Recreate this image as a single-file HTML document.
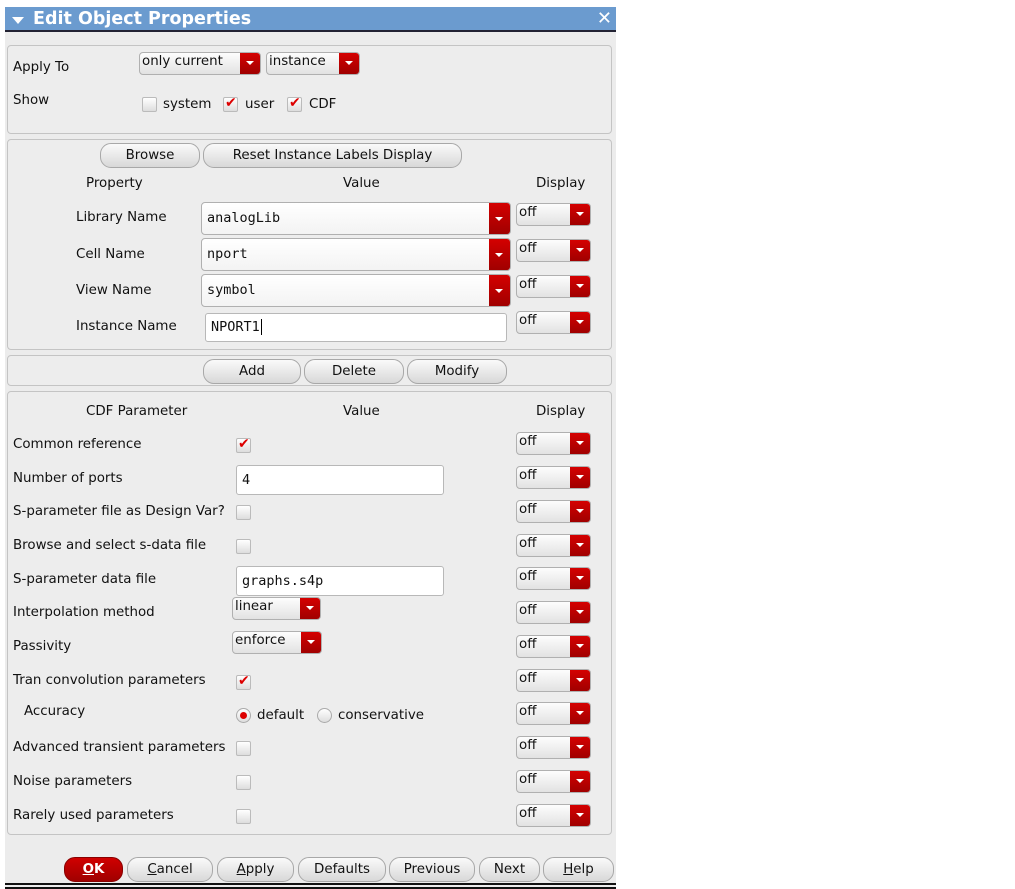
<!DOCTYPE html>
<html><head><meta charset="utf-8"><style>
*{box-sizing:border-box;margin:0;padding:0}
body{width:1015px;height:889px;background:#fff;position:relative;overflow:hidden;font-family:"DejaVu Sans","Liberation Sans",sans-serif;font-size:13.4px;color:#111}
.dlg{position:absolute;left:5px;top:7px;width:611px;height:882px;background:#ececec}
.title{position:absolute;left:5px;top:7px;width:611px;height:25px;background:#6b9bcf;border-bottom:2px solid #223;color:#fff;font-weight:bold;font-size:17.5px;line-height:24px;padding-left:28px}
.title .tri{position:absolute;left:7px;top:10px;border-left:6px solid transparent;border-right:6px solid transparent;border-top:7px solid #fff}
.title .x{position:absolute;right:4px;top:0;font-size:18px}
.p{position:absolute;left:7px;width:605px;border:1px solid #c4c4c4;border-radius:4px;background:#ededed}
.a{position:absolute;white-space:nowrap}
.cb{position:absolute;height:23px;background:linear-gradient(#fdfdfd,#e2e2e2);border:1px solid #b0b0b0;border-radius:4px;padding-left:2px;line-height:18px;overflow:hidden}
.cb .r{position:absolute;right:0;top:0;bottom:0;width:20px;background:linear-gradient(#d40000,#a00000)}
.cb .r:after{content:"";position:absolute;left:6px;top:8px;border-left:4px solid transparent;border-right:4px solid transparent;border-top:4px solid #fff}
.vc{height:33px;line-height:30px;font-family:"DejaVu Sans Mono","Liberation Mono",monospace;padding-left:5px;font-size:13.5px;background:linear-gradient(#fff,#f3f3f3)}
.vc .r{width:21px}
.vc .r:after{top:14px}
.tf{position:absolute;background:#fff;border:1px solid #b8b8b8;border-radius:3px;font-family:"DejaVu Sans Mono","Liberation Mono",monospace;font-size:13.5px;padding-left:5px}
.btn{position:absolute;height:25px;background:linear-gradient(#fafafa,#d8d8d8);border:1px solid #a8a8a8;border-radius:11px;text-align:center;line-height:23px}
.ck{position:absolute;width:15px;height:15px;border:1px solid #bbb;border-radius:2px;background:linear-gradient(#fff,#ddd)}
.ck.on:after{content:"✔";position:absolute;left:1px;top:-3px;color:#d00;font-size:14px}
.rad{position:absolute;width:15px;height:15px;border:1px solid #aaa;border-radius:50%;background:linear-gradient(#fff,#ddd)}
.rad.on:after{content:"";position:absolute;left:3px;top:3px;width:7px;height:7px;border-radius:50%;background:#d00}
</style></head><body>
<div class="dlg"></div>
<div class="title"><span class="tri"></span>Edit Object Properties<span class="x">✕</span></div>

<div class="p" style="top:45px;height:89px"></div>
<div class="a" style="left:13px;top:60px">Apply To</div>
<div class="a" style="left:13px;top:93px">Show</div>
<div class="cb" style="left:139px;top:52px;width:122px">only current<span class="r"></span></div>
<div class="cb" style="left:266px;top:52px;width:94px">instance<span class="r"></span></div>
<div class="ck" style="left:142px;top:97px"></div><div class="a" style="left:163px;top:97px">system</div>
<div class="ck on" style="left:223px;top:97px"></div><div class="a" style="left:245px;top:97px">user</div>
<div class="ck on" style="left:287px;top:97px"></div><div class="a" style="left:309px;top:97px">CDF</div>

<div class="p" style="top:139px;height:211px"></div>
<div class="btn" style="left:100px;top:143px;width:100px">Browse</div>
<div class="btn" style="left:203px;top:143px;width:259px">Reset Instance Labels Display</div>
<div class="a" style="left:86px;top:176px">Property</div>
<div class="a" style="left:343px;top:176px">Value</div>
<div class="a" style="left:536px;top:176px">Display</div>
<div class="a" style="left:76px;top:210px">Library Name</div>
<div class="a" style="left:76px;top:247px">Cell Name</div>
<div class="a" style="left:76px;top:283px">View Name</div>
<div class="a" style="left:76px;top:319px">Instance Name</div>
<div class="cb vc" style="left:201px;top:202px;width:310px">analogLib<span class="r"></span></div>
<div class="cb vc" style="left:201px;top:238px;width:310px">nport<span class="r"></span></div>
<div class="cb vc" style="left:201px;top:274px;width:310px">symbol<span class="r"></span></div>
<div class="tf" style="left:205px;top:313px;width:302px;height:29px;line-height:27px">NPORT1<span style="border-left:1px solid #000;margin-left:1px"></span></div>
<div class="cb" style="left:516px;top:203px;width:75px">off<span class="r"></span></div>
<div class="cb" style="left:516px;top:239px;width:75px">off<span class="r"></span></div>
<div class="cb" style="left:516px;top:275px;width:75px">off<span class="r"></span></div>
<div class="cb" style="left:516px;top:311px;width:75px">off<span class="r"></span></div>

<div class="p" style="top:355px;height:31px"></div>
<div class="btn" style="left:203px;top:359px;width:98px">Add</div>
<div class="btn" style="left:304px;top:359px;width:100px">Delete</div>
<div class="btn" style="left:407px;top:359px;width:100px">Modify</div>

<div class="p" style="top:391px;height:444px"></div>
<div class="a" style="left:86px;top:404px">CDF Parameter</div>
<div class="a" style="left:343px;top:404px">Value</div>
<div class="a" style="left:536px;top:404px">Display</div>

<div class="a" style="left:13px;top:437px">Common reference</div>
<div class="a" style="left:13px;top:471px">Number of ports</div>
<div class="a" style="left:13px;top:504px">S-parameter file as Design Var?</div>
<div class="a" style="left:13px;top:538px">Browse and select s-data file</div>
<div class="a" style="left:13px;top:572px">S-parameter data file</div>
<div class="a" style="left:13px;top:605px">Interpolation method</div>
<div class="a" style="left:13px;top:639px">Passivity</div>
<div class="a" style="left:13px;top:673px">Tran convolution parameters</div>
<div class="a" style="left:24px;top:704px">Accuracy</div>
<div class="a" style="left:13px;top:740px">Advanced transient parameters</div>
<div class="a" style="left:13px;top:774px">Noise parameters</div>
<div class="a" style="left:13px;top:808px">Rarely used parameters</div>

<div class="ck on" style="left:236px;top:438px"></div>
<div class="tf" style="left:236px;top:465px;width:208px;height:30px;line-height:28px">4</div>
<div class="ck" style="left:236px;top:505px"></div>
<div class="ck" style="left:236px;top:539px"></div>
<div class="tf" style="left:236px;top:566px;width:208px;height:30px;line-height:28px">graphs.s4p</div>
<div class="cb" style="left:232px;top:597px;width:89px">linear<span class="r"></span></div>
<div class="cb" style="left:232px;top:631px;width:90px">enforce<span class="r"></span></div>
<div class="ck on" style="left:236px;top:675px"></div>
<div class="rad on" style="left:236px;top:708px"></div><div class="a" style="left:257px;top:708px">default</div>
<div class="rad" style="left:317px;top:708px"></div><div class="a" style="left:338px;top:708px">conservative</div>
<div class="ck" style="left:236px;top:741px"></div>
<div class="ck" style="left:236px;top:775px"></div>
<div class="ck" style="left:236px;top:809px"></div>

<div class="cb" style="left:516px;top:432px;width:75px">off<span class="r"></span></div>
<div class="cb" style="left:516px;top:466px;width:75px">off<span class="r"></span></div>
<div class="cb" style="left:516px;top:500px;width:75px">off<span class="r"></span></div>
<div class="cb" style="left:516px;top:534px;width:75px">off<span class="r"></span></div>
<div class="cb" style="left:516px;top:567px;width:75px">off<span class="r"></span></div>
<div class="cb" style="left:516px;top:601px;width:75px">off<span class="r"></span></div>
<div class="cb" style="left:516px;top:635px;width:75px">off<span class="r"></span></div>
<div class="cb" style="left:516px;top:669px;width:75px">off<span class="r"></span></div>
<div class="cb" style="left:516px;top:702px;width:75px">off<span class="r"></span></div>
<div class="cb" style="left:516px;top:736px;width:75px">off<span class="r"></span></div>
<div class="cb" style="left:516px;top:770px;width:75px">off<span class="r"></span></div>
<div class="cb" style="left:516px;top:804px;width:75px">off<span class="r"></span></div>

<div class="btn" style="left:64px;top:857px;width:59px;background:linear-gradient(#d00000,#a00000);border-color:#800;color:#fff;font-weight:bold"><u>O</u>K</div>
<div class="btn" style="left:127px;top:857px;width:86px"><u>C</u>ancel</div>
<div class="btn" style="left:217px;top:857px;width:77px"><u>A</u>pply</div>
<div class="btn" style="left:298px;top:857px;width:88px">Defaults</div>
<div class="btn" style="left:389px;top:857px;width:86px">Previous</div>
<div class="btn" style="left:479px;top:857px;width:61px">Next</div>
<div class="btn" style="left:543px;top:857px;width:71px"><u>H</u>elp</div>
<div style="position:absolute;left:5px;top:883px;width:611px;height:2px;background:#111"></div>
<div style="position:absolute;left:5px;top:887px;width:611px;height:2px;background:#111"></div>
</body></html>
